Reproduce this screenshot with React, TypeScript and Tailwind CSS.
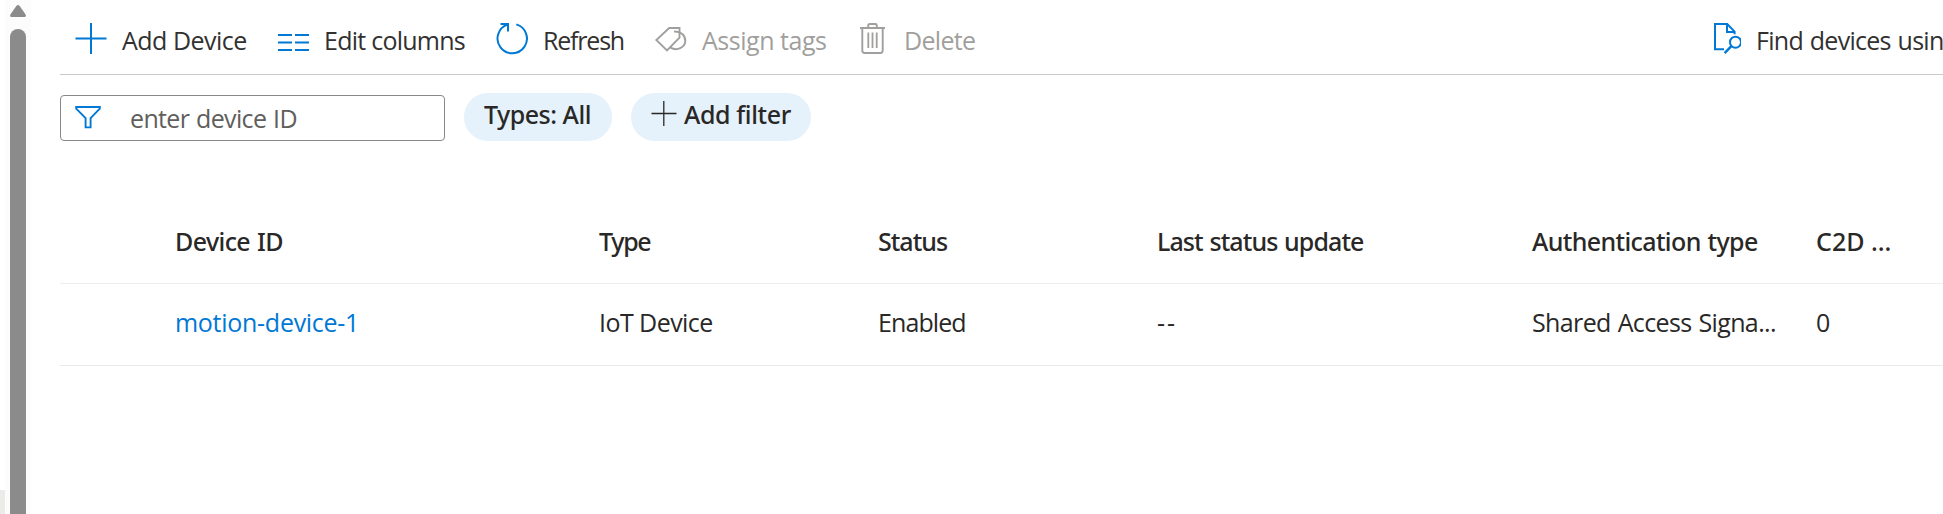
import React from "react";

type IconProps = { className?: string };

const stroke = { fill: "none", stroke: "currentColor" } as const;

function PlusIcon() {
  return (
    <svg width="32" height="32" viewBox="0 0 32 32" {...stroke} strokeWidth="2">
      <path d="M0.5 15.5H31.5M16 0V31" />
    </svg>
  );
}

function ColumnsIcon() {
  return (
    <svg width="32" height="32" viewBox="0 0 32 32" {...stroke} strokeWidth="2">
      <path d="M1 12H15M18 12H32M1 19.5H15M18 19.5H32M1 27H15M18 27H32" strokeWidth="1.8" />
    </svg>
  );
}

function RefreshIcon() {
  return (
    <svg width="32" height="32" viewBox="0 0 32 32" {...stroke} strokeWidth="2">
      <path d="M20.3 1.4A14.7 14.7 0 1 1 11.5 1.6" />
      <path d="M4.5 1H12V8.5" />
    </svg>
  );
}

function TagsIcon() {
  return (
    <svg width="32" height="32" viewBox="0 0 32 32" {...stroke} strokeWidth="1.9">
      <path d="M14.2 5H24.5V14.6L12 27.4L1.3 17Z" />
      <path d="M19 8.6C26 8.2 30.4 12 30.3 18C30 24.5 22 28.5 15.5 24.6" />
    </svg>
  );
}

function TrashIcon() {
  return (
    <svg width="32" height="32" viewBox="0 0 32 32" {...stroke} strokeWidth="1.9">
      <path d="M3 5H28M11.2 5V2.5Q11.2 1 12.7 1H18.3Q19.8 1 19.8 2.5V5" />
      <path d="M5.3 5V27.5Q5.3 30 7.8 30H23.2Q25.7 30 25.7 27.5V5" />
      <path d="M11.3 9.5V25M15.5 9.5V25M19.7 9.5V25" strokeWidth="1.8" />
    </svg>
  );
}

function FindDocIcon() {
  return (
    <svg width="32" height="32" viewBox="0 0 32 32" {...stroke} strokeWidth="2">
      <path d="M15 26.2H6V1H18.2L25.6 8.6V11.2" />
      <path d="M18 1V8.9H26" />
      <circle cx="26.5" cy="19.2" r="5.5" />
      <path d="M22.4 23.2L15.6 30.2" strokeWidth="2.4" />
    </svg>
  );
}

function FilterIcon({ className }: IconProps) {
  return (
    <svg className={className} width="28" height="24" viewBox="0 0 28 24" {...stroke} strokeWidth="1.9">
      <path d="M1.2 1H24.8V2.6L15.6 12.2V21.4H10.6V12.2L1.2 2.6Z" />
    </svg>
  );
}

function ThinPlusIcon() {
  return (
    <svg width="26" height="26" viewBox="0 0 26 26" {...stroke} strokeWidth="1.3">
      <path d="M0.5 12.5H25.5M12.8 0V25" />
    </svg>
  );
}

type CommandProps = {
  icon: React.ReactNode;
  label: string;
  width: string;
  tracking: string;
  disabled?: boolean;
};

function Command({ icon, label, width, tracking, disabled }: CommandProps) {
  return (
    <button
      disabled={disabled}
      className={`flex shrink-0 items-start gap-[15px] whitespace-nowrap text-left ${width} ${
        disabled ? "text-[#a19f9d]" : "text-[#323130]"
      }`}
    >
      <span className={`shrink-0 ${disabled ? "" : "text-[#0078d4]"}`}>{icon}</span>
      <span className={tracking}>{label}</span>
    </button>
  );
}

const gridCols = "grid grid-cols-[115px_424px_279px_279px_375px_284px_127px]";

export default function App() {
  return (
    <div className="flex h-[514px] w-[1943px] overflow-hidden bg-white font-['Open_Sans','Noto_Sans',sans-serif] text-[25px] leading-[34px] text-[#292827]">
      <div className="flex w-[5px] shrink-0 flex-col justify-end">
        <div className="h-6 bg-[#edebe9]" />
      </div>
      <div className="flex w-[26px] shrink-0 flex-col items-center bg-[#fcfcfc] pt-[5px]">
        <svg width="16" height="12" viewBox="0 0 16 12" className="shrink-0 fill-[#8b8b8b]">
          <path d="M6.3 1Q8 -0.9 9.7 1L15.6 9.4Q16.6 12 14.4 12H1.6Q-0.6 12 0.4 9.4Z" />
        </svg>
        <div className="mt-3 w-4 grow rounded-t-full bg-[#8b8b8b]" />
      </div>

      <main className="ml-[29px] flex w-[1883px] shrink-0 flex-col">
        <div className="flex h-[75px] shrink-0 border-b border-[#c8c8c8] pl-[15px] pt-[23px]">
          <Command icon={<PlusIcon />} label="Add Device" width="w-[202px]" tracking="tracking-[-0.5px]" />
          <Command icon={<ColumnsIcon />} label="Edit columns" width="w-[219px]" tracking="tracking-[-0.75px] word-spacing-[1px]" />
          <Command icon={<RefreshIcon />} label="Refresh" width="w-[159px]" tracking="tracking-[-1.2px]" />
          <Command icon={<TagsIcon />} label="Assign tags" width="w-[202px]" tracking="tracking-[-0.47px]" disabled />
          <Command icon={<TrashIcon />} label="Delete" width="w-[852px]" tracking="tracking-[-0.7px]" disabled />
          <Command icon={<FindDocIcon />} label="Find devices usin" width="w-[234px]" tracking="tracking-[-0.72px] [word-spacing:1px]" />
        </div>

        <div className="mt-[18px] flex h-12 shrink-0">
          <div className="mt-[2px] flex h-[46px] w-[385px] items-center rounded-[4px] border border-[#8a8886] pl-[14px] text-[#605e5c]">
            <FilterIcon className="mt-[-1px] shrink-0 text-[#0078d4]" />
            <span className="ml-[27px] tracking-[-0.66px] [word-spacing:1px]">enter device ID</span>
          </div>
          <button className="ml-[19px] flex w-[148px] items-center rounded-full bg-[#e5f1fb] pb-[7px] pl-5 font-['Noto_Sans',sans-serif] font-medium tracking-[-0.5px]">
            Types: All
          </button>
          <button className="ml-[19px] flex w-[180px] items-center gap-[7px] rounded-full bg-[#e5f1fb] pb-[7px] pl-5 font-['Noto_Sans',sans-serif] font-medium tracking-[-0.4px]">
            <ThinPlusIcon />
            Add filter
          </button>
        </div>

        <div
          className={`${gridCols} mt-[62px] h-[81px] shrink-0 border-b border-[#eeeeee] pt-[21px] font-['Noto_Sans',sans-serif] font-medium whitespace-nowrap`}
        >
          <span />
          <span className="tracking-[-0.6px] [word-spacing:1px]">Device ID</span>
          <span className="tracking-[-1.3px]">Type</span>
          <span className="tracking-[-1px]">Status</span>
          <span className="tracking-[-0.9px] [word-spacing:1px]">Last status update</span>
          <span className="tracking-[-0.63px] [word-spacing:1px]">Authentication type</span>
          <span>C2D ...</span>
        </div>
        <div className={`${gridCols} h-[82px] shrink-0 border-b border-[#eaeaea] pt-[21px] whitespace-nowrap`}>
          <span />
          <a className="tracking-[-0.28px] text-[#0078d4]">motion-device-1</a>
          <span className="tracking-[-0.55px]">IoT Device</span>
          <span className="tracking-[-0.9px]">Enabled</span>
          <span className="tracking-[2px]">--</span>
          <span className="tracking-[-0.62px] [word-spacing:1px]">Shared Access Signa...</span>
          <span>0</span>
        </div>
      </main>
    </div>
  );
}
